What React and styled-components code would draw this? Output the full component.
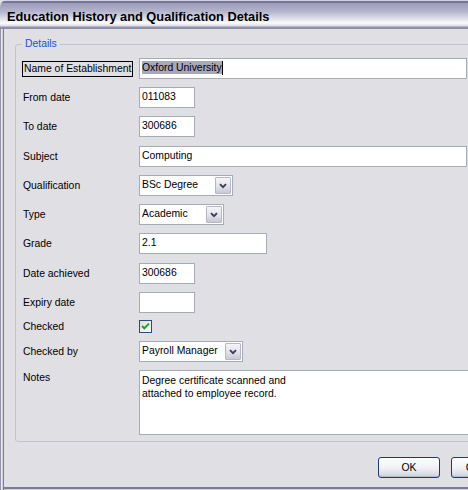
import React from 'react';
import styled, { createGlobalStyle } from 'styled-components';

const GlobalStyle = createGlobalStyle`
  html, body {
    margin: 0;
    padding: 0;
    overflow: hidden;
    background: #e0dfe3;
  }
  body {
    font-family: "Liberation Sans", Arial, sans-serif;
    font-size: 10.4px;
    color: #000;
  }
`;

const Window = styled.div`
  width: 530px;
  height: 490px;
  display: flex;
  flex-direction: column;
  background: #e0dfe3;
`;

const TitleBar = styled.div`
  flex: none;
  height: 29px;
  box-sizing: border-box;
  padding: 9px 0 0 7px;
  font: bold 12.8px/15px "Liberation Sans", Arial, sans-serif;
  color: #000;
  border-top-left-radius: 7px;
  background: linear-gradient(
    to bottom,
    #d2d2de 0px,
    #d2d2de 1px,
    #76769a 1px,
    #76769a 3px,
    #9c9cba 3px,
    #b2b2cb 11px,
    #e6e6f0 20px,
    #fcfcfe 23px,
    #dcdce5 26px,
    #9494ac 27px,
    #8a8aa4 29px
  );
`;

const Frame = styled.div`
  flex: 1;
  display: flex;
  flex-direction: column;
  padding: 9px 0 0 15px;
  box-shadow:
    inset 1px 0 #9494ac,
    inset 2px 0 #e6e6ee,
    inset 3px 0 #d2d2de,
    inset 4px 0 #7c7c96,
    inset 0 -1px #d2d2de,
    inset 0 -3px #7c7c96;
`;

const Group = styled.fieldset`
  margin: 0;
  width: 495px;
  height: 404px;
  box-sizing: border-box;
  border: 1px solid #c4c3cc;
  border-radius: 3px;
  padding: 0 0 0 6px;
  display: flex;
  flex-direction: column;
`;

const Legend = styled.legend`
  padding: 0 3px;
  color: #1e4fd8;
  font-size: 10.4px;
  line-height: 12px;
`;

const Row = styled.div`
  display: flex;
  align-items: ${p => (p.$top ? 'flex-start' : 'center')};
  margin-top: ${p => p.$gap}px;
`;

const LabelCell = styled.div`
  width: 117px;
  flex: none;
  display: flex;
  align-items: center;
`;

const Caption = styled.span`
  line-height: ${p => (p.$focus ? '14px' : '15px')};
  padding: ${p => (p.$focus ? '0 1px' : '0 0 0 1px')};
  border: ${p => (p.$focus ? '1px solid #000' : 'none')};
  white-space: nowrap;
`;

const Field = styled.div`
  width: ${p => p.$w}px;
  height: ${p => p.$h || 21}px;
  box-sizing: border-box;
  flex: none;
  border: 1px solid #a5acb5;
  background: #fff;
  padding: ${p => (p.$multi ? '3px 0 0 2px' : '1px 0 0 2px')};
  line-height: ${p => (p.$multi ? '13px' : '15px')};
  white-space: nowrap;
  overflow: hidden;
`;

const Selected = styled.span`
  display: inline-block;
  background: #a9a8ba;
  line-height: 13px;
  margin-top: 1px;
  vertical-align: top;
`;

const Caret = styled.span`
  display: inline-block;
  width: 1px;
  height: 14px;
  background: #000;
  vertical-align: top;
  margin-top: 1px;
`;

const Combo = styled.div`
  width: ${p => p.$w}px;
  height: 21px;
  box-sizing: border-box;
  flex: none;
  border: 1px solid #a5acb5;
  background: #fff;
  display: flex;
  align-items: stretch;
`;

const ComboText = styled.div`
  flex: 1;
  padding: 1px 0 0 2px;
  line-height: 15px;
  white-space: nowrap;
`;

const DropButton = styled.div`
  width: 16px;
  margin: 1px 1px 1px 0;
  box-sizing: border-box;
  border: 1px solid #b6b6c8;
  border-radius: 1px;
  background: linear-gradient(to bottom, #f4f4f8, #e2e2ea 55%, #c8c8d6);
  display: flex;
  align-items: center;
  justify-content: center;
`;

const CheckBox = styled.div`
  width: 13px;
  height: 13px;
  box-sizing: border-box;
  border: 1px solid #1c5180;
  background: linear-gradient(135deg, #dcdcd7, #ffffff);
  display: flex;
  align-items: center;
  justify-content: center;
`;

const ButtonBar = styled.div`
  display: flex;
  gap: 11px;
  margin-top: 15px;
  padding-left: 363px;
`;

const PushButton = styled.button`
  width: 62px;
  height: 21px;
  box-sizing: border-box;
  flex: none;
  margin: 0;
  padding: 0;
  border: 1px solid #1f3b6e;
  border-radius: 3px;
  background: linear-gradient(to bottom, #ffffff, #f2f2f6 50%, #dcdce6 85%, #c6c6d4);
  box-shadow: inset 0 -1px #bcbccc;
  font: 10.4px/15px "Liberation Sans", Arial, sans-serif;
  color: #000;
`;

const Chevron = () => (
  <svg width="8" height="6" viewBox="0 0 8 6">
    <path d="M1 1.2 L4 4.2 L7 1.2" fill="none" stroke="#3c3c58" strokeWidth="1.9" />
  </svg>
);

const Tick = () => (
  <svg width="11" height="11" viewBox="0 0 11 11">
    <path d="M2 5 L4.3 7.3 L9 2.6" fill="none" stroke="#21a121" strokeWidth="2" />
  </svg>
);

const TextRow = ({ label, value, w, gap, focus, children }) => (
  <Row $gap={gap}>
    <LabelCell>
      <Caption $focus={focus}>{label}</Caption>
    </LabelCell>
    <Field $w={w}>{children || value}</Field>
  </Row>
);

const ComboRow = ({ label, value, w, gap }) => (
  <Row $gap={gap}>
    <LabelCell>
      <Caption>{label}</Caption>
    </LabelCell>
    <Combo $w={w}>
      <ComboText>{value}</ComboText>
      <DropButton>
        <Chevron />
      </DropButton>
    </Combo>
  </Row>
);

export default function App() {
  return (
    <>
      <GlobalStyle />
      <Window>
        <TitleBar>Education History and Qualification Details</TitleBar>
        <Frame>
          <Group>
            <Legend>Details</Legend>
            <TextRow label="Name of Establishment" w={328} gap={8} focus>
              <Selected>Oxford University</Selected>
              <Caret />
            </TextRow>
            <TextRow label="From date" value="011083" w={56} gap={8} />
            <TextRow label="To date" value="300686" w={56} gap={8} />
            <TextRow label="Subject" value="Computing" w={328} gap={9} />
            <ComboRow label="Qualification" value="BSc Degree" w={94} gap={8} />
            <ComboRow label="Type" value="Academic" w={85} gap={8} />
            <TextRow label="Grade" value="2.1" w={128} gap={8} />
            <TextRow label="Date achieved" value="300686" w={56} gap={9} />
            <TextRow label="Expiry date" value="" w={56} gap={8} />
            <Row $gap={6}>
              <LabelCell>
                <Caption>Checked</Caption>
              </LabelCell>
              <CheckBox>
                <Tick />
              </CheckBox>
            </Row>
            <ComboRow label="Checked by" value="Payroll Manager" w={104} gap={7} />
            <Row $gap={8} $top>
              <LabelCell>
                <Caption>Notes</Caption>
              </LabelCell>
              <Field $w={345} $h={65} $multi>
                Degree certificate scanned and
                <br />
                attached to employee record.
              </Field>
            </Row>
          </Group>
          <ButtonBar>
            <PushButton>OK</PushButton>
            <PushButton>Cancel</PushButton>
          </ButtonBar>
        </Frame>
      </Window>
    </>
  );
}
